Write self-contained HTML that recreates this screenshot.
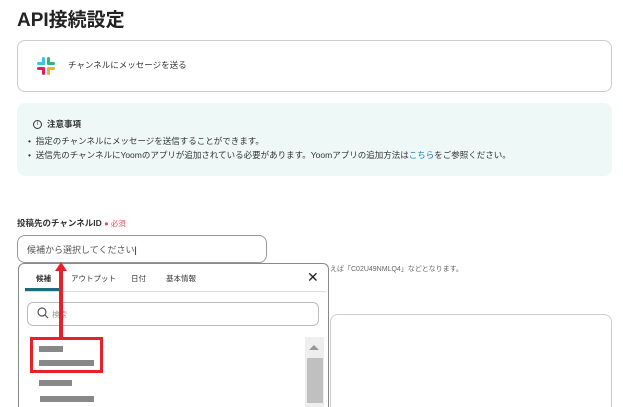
<!DOCTYPE html>
<html style="overflow:hidden;height:407px"><head><meta charset="utf-8"><style>
*{margin:0;padding:0;box-sizing:border-box}
body{width:623px;height:407px;overflow:hidden;background:#fff;font-family:"Liberation Sans","Noto Sans CJK JP",sans-serif;color:#333;position:relative}
.a{position:absolute;white-space:nowrap}
.bar{position:absolute;background:#888}
</style></head><body>
<div class="a" style="left:17px;top:5px;font-size:19px;font-weight:bold;color:#222">API接続設定</div>
<div class="a" style="left:17px;top:40px;width:595px;height:52px;border:1px solid #ccc;border-radius:8px"></div>
<svg class="a" style="left:36px;top:56px" width="20" height="20" viewBox="0 0 20 20">
<rect x="6" y="1" width="3" height="8" rx="1.5" fill="#36c5f0"/><rect x="1" y="6" width="8" height="3" rx="1.5" fill="#36c5f0"/>
<rect x="11" y="1" width="3" height="8" rx="1.5" fill="#2eb67d"/><rect x="11" y="6" width="8" height="3" rx="1.5" fill="#2eb67d"/>
<rect x="11" y="11" width="8" height="3" rx="1.5" fill="#ecb22e"/><rect x="11" y="11" width="3" height="8" rx="1.5" fill="#ecb22e"/>
<rect x="1" y="11" width="8" height="3" rx="1.5" fill="#e01e5a"/><rect x="6" y="11" width="3" height="8" rx="1.5" fill="#e01e5a"/>
</svg>
<div class="a" style="left:68px;top:59px;font-size:8.5px">チャンネルにメッセージを送る</div>
<div class="a" style="left:17px;top:103px;width:595px;height:73px;background:#eef8f7;border-radius:8px"></div>
<div class="a" style="left:33px;top:120px;width:9px;height:9px;border:1px solid #333;border-radius:50%;font-size:6px;line-height:7px;text-align:center">i</div>
<div class="a" style="left:47px;top:118px;font-size:8.5px;font-weight:bold">注意事項</div>
<div class="a" style="left:28px;top:135px;font-size:8.5px">•&nbsp;&nbsp;指定のチャンネルにメッセージを送信することができます。</div>
<div class="a" style="left:28px;top:149px;font-size:8.5px">•&nbsp;&nbsp;送信先のチャンネルにYoomのアプリが追加されている必要があります。Yoomアプリの追加方法は<span style="color:#1a7fa8">こちら</span>をご参照ください。</div>
<div class="a" style="left:17px;top:217px;font-size:8.5px;font-weight:bold">投稿先のチャンネルID <span style="color:#e84a5f;font-weight:normal;font-size:7.5px">● 必須</span></div>
<div class="a" style="left:17px;top:235px;width:250px;height:28px;border:1px solid #999;border-radius:8px"></div>
<div class="a" style="left:27px;top:243px;font-size:9px;color:#555">候補から選択してください<span style="color:#000">|</span></div>
<div class="a" style="left:330px;top:264px;font-size:7px;color:#666">えば「C02U49NMLQ4」などとなります。</div>
<div class="a" style="left:330px;top:314px;width:282px;height:93px;border:1px solid #ccc;border-bottom:none;border-radius:8px 8px 0 0"></div>
<div class="a" style="left:18px;top:263px;width:311px;height:144px;border:1px solid #888;border-bottom:none;border-radius:6px 6px 0 0;background:#fff"></div>
<div class="a" style="left:36px;top:273px;font-size:7.5px;font-weight:bold">候補</div>
<div class="a" style="left:71px;top:273px;font-size:7.5px">アウトプット</div>
<div class="a" style="left:131px;top:273px;font-size:7.5px">日付</div>
<div class="a" style="left:166px;top:273px;font-size:7.5px">基本情報</div>
<div class="a" style="left:25px;top:291px;width:301px;height:1px;background:#ddd"></div>
<div class="a" style="left:25px;top:288px;width:34px;height:3px;background:#1e6a80"></div>
<div class="a" style="left:307px;top:269px;font-size:14px;color:#222">✕</div>
<div class="a" style="left:27px;top:302px;width:292px;height:24px;border:1px solid #bbb;border-radius:6px"></div>
<svg class="a" style="left:37px;top:307px" width="12" height="12" viewBox="0 0 12 12"><circle cx="5" cy="5" r="4" fill="none" stroke="#555" stroke-width="1.2"/><line x1="8" y1="8" x2="11" y2="11" stroke="#555" stroke-width="1.2"/></svg>
<div class="a" style="left:52px;top:309px;font-size:7.5px;color:#999">検索</div>
<div class="a" style="left:305px;top:337px;width:19px;height:70px;background:#eee"></div>
<div class="a" style="left:309px;top:345px;width:0;height:0;border-left:5px solid transparent;border-right:5px solid transparent;border-bottom:5px solid #999"></div>
<div class="a" style="left:307px;top:358px;width:16px;height:45px;background:#c0c0c0"></div>
<div class="bar" style="left:39px;top:346px;width:24px;height:6px"></div>
<div class="bar" style="left:39px;top:360px;width:55px;height:6px"></div>
<div class="bar" style="left:39px;top:380px;width:33px;height:6px"></div>
<div class="bar" style="left:40px;top:396px;width:54px;height:6px"></div>
<div class="a" style="left:30px;top:337px;width:73px;height:36px;border:3px solid #e8202a"></div>
<div class="a" style="left:59px;top:270px;width:4px;height:68px;background:#e8202a"></div>
<div class="a" style="left:55px;top:262px;width:0;height:0;border-left:6px solid transparent;border-right:6px solid transparent;border-bottom:9px solid #e8202a"></div>
</body></html>
